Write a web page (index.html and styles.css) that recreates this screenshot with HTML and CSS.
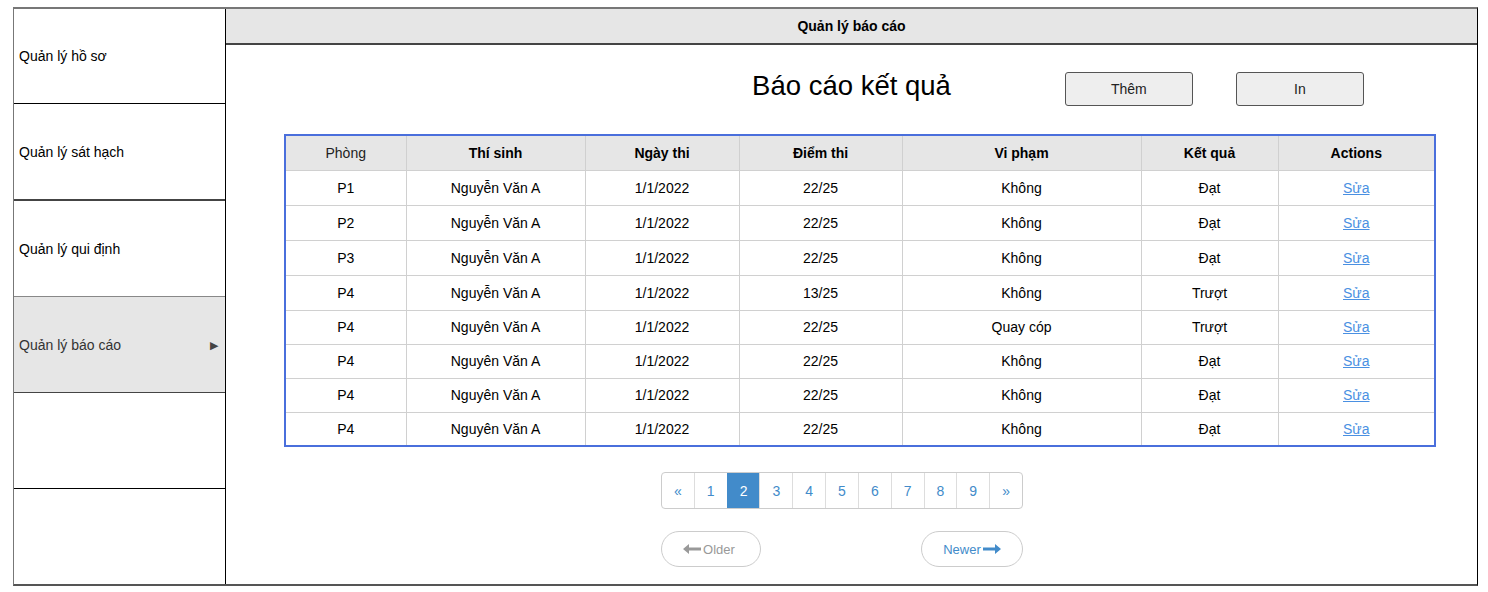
FILE: index.html
```html
<!DOCTYPE html>
<html lang="vi">
<head>
<meta charset="utf-8">
<title>Quản lý báo cáo</title>
<link rel="stylesheet" href="styles.css">
</head>
<body>
<div class="frame">
  <nav class="sidebar">
    <div class="nav-item">Quản lý hồ sơ</div>
    <div class="nav-item thick">Quản lý sát hạch</div>
    <div class="nav-item">Quản lý qui định</div>
    <div class="nav-item active">Quản lý báo cáo <span class="caret">&#9654;</span></div>
    <div class="nav-item"></div>
    <div class="nav-item last"></div>
  </nav>
  <main class="main">
    <header class="topbar">Quản lý báo cáo</header>
    <div class="title-row">
      <div></div>
      <h1 class="title">Báo cáo kết quả</h1>
      <div class="actions">
        <button class="btn">Thêm</button>
        <button class="btn">In</button>
      </div>
    </div>
    <table class="grid">
      <colgroup>
        <col style="width:121px"><col style="width:179px"><col style="width:154px"><col style="width:163px"><col style="width:239px"><col style="width:137px"><col style="width:157px">
      </colgroup>
      <thead>
        <tr><th class="normal">Phòng</th><th>Thí sinh</th><th>Ngày thi</th><th>Điểm thi</th><th>Vi phạm</th><th>Kết quả</th><th>Actions</th></tr>
      </thead>
      <tbody>
        <tr><td>P1</td><td>Nguyễn Văn A</td><td>1/1/2022</td><td>22/25</td><td>Không</td><td>Đạt</td><td><a href="#">Sửa</a></td></tr>
        <tr><td>P2</td><td>Nguyễn Văn A</td><td>1/1/2022</td><td>22/25</td><td>Không</td><td>Đạt</td><td><a href="#">Sửa</a></td></tr>
        <tr><td>P3</td><td>Nguyễn Văn A</td><td>1/1/2022</td><td>22/25</td><td>Không</td><td>Đạt</td><td><a href="#">Sửa</a></td></tr>
        <tr><td>P4</td><td>Nguyễn Văn A</td><td>1/1/2022</td><td>13/25</td><td>Không</td><td>Trượt</td><td><a href="#">Sửa</a></td></tr>
        <tr><td>P4</td><td>Nguyên Văn A</td><td>1/1/2022</td><td>22/25</td><td>Quay cóp</td><td>Trượt</td><td><a href="#">Sửa</a></td></tr>
        <tr><td>P4</td><td>Nguyên Văn A</td><td>1/1/2022</td><td>22/25</td><td>Không</td><td>Đạt</td><td><a href="#">Sửa</a></td></tr>
        <tr><td>P4</td><td>Nguyên Văn A</td><td>1/1/2022</td><td>22/25</td><td>Không</td><td>Đạt</td><td><a href="#">Sửa</a></td></tr>
        <tr><td>P4</td><td>Nguyên Văn A</td><td>1/1/2022</td><td>22/25</td><td>Không</td><td>Đạt</td><td><a href="#">Sửa</a></td></tr>
      </tbody>
    </table>
    <div class="pager-wrap">
      <ul class="pagination">
        <li>&laquo;</li><li>1</li><li class="current">2</li><li>3</li><li>4</li><li>5</li><li>6</li><li>7</li><li>8</li><li>9</li><li>&raquo;</li>
      </ul>
      <div class="pager">
        <span class="pill older"><svg width="18" height="10" viewBox="0 0 18 10"><path d="M0 5 L6 0 L6 3.5 L18 3.5 L18 6.5 L6 6.5 L6 10 Z" fill="#999"/></svg>Older</span>
        <span class="pill newer">Newer<svg width="18" height="10" viewBox="0 0 18 10"><path d="M18 5 L12 0 L12 3.5 L0 3.5 L0 6.5 L12 6.5 L12 10 Z" fill="#428bca"/></svg></span>
      </div>
    </div>
  </main>
</div>
</body>
</html>
```
FILE: styles.css
```css
* { box-sizing: border-box; }
html, body { margin: 0; padding: 0; background: #fff; }
body {
  font-family: "Liberation Sans", Arial, sans-serif;
  font-size: 14px;
  color: #000;
  padding: 7px 10px 0 13px;
}
.frame {
  width: 1465px;
  height: 579px;
  display: grid;
  grid-template-columns: 212px 1fr;
  border: 1px solid #000;
  border-top: 2px solid #777;
  border-left: 1px solid #777;
  border-bottom: 2px solid #555;
}
.sidebar {
  display: flex;
  flex-direction: column;
  border-right: 1px solid #000;
}
.nav-item {
  height: 96px;
  display: flex;
  align-items: center;
  padding-left: 5px;
  padding-right: 8px;
  border-bottom: 1px solid #000;
  font-size: 14px;
  color: #000;
  position: relative;
}
.nav-item:first-child { height: 95px; }
.nav-item.thick { border-bottom: 2px solid #444; height: 97px; }
.nav-item.active {
  background: #e6e6e6;
  color: #333;
  border-top: 1px solid #888;
  margin-top: -1px;
  border-bottom: 1px solid #444;
  height: 97px;
}
.nav-item.last { border-bottom: none; flex: 1; height: auto; }
.caret {
  position: absolute;
  right: 7px;
  top: 50%;
  transform: translateY(-45%);
  font-size: 11px;
  color: #444;
}
.main {
  display: flex;
  flex-direction: column;
  min-width: 0;
}
.topbar {
  height: 36px;
  background: #e6e6e6;
  border-bottom: 2px solid #444;
  display: flex;
  align-items: center;
  justify-content: center;
  font-weight: bold;
  font-size: 14px;
}
.title-row {
  display: grid;
  grid-template-columns: 1fr auto 1fr;
  align-items: center;
  margin-top: 27px;
  height: 34px;
}
.title {
  margin: 0;
  font-weight: normal;
  font-size: 27.5px;
  line-height: 30px;
  margin-top: -6px;
}
.actions {
  display: flex;
  gap: 43px;
  padding-left: 114px;
}
.btn {
  width: 128px;
  height: 34px;
  background: #eee;
  border: 1px solid #555;
  border-radius: 3px;
  font-family: "Liberation Sans", Arial, sans-serif;
  font-size: 14px;
  color: #222;
  padding: 0;
}
.grid {
  margin: 28px 0 0 58px;
  width: 1150px;
  table-layout: fixed;
  border-collapse: collapse;
  border: 2px solid #4a6fdc;
}
.grid th, .grid td {
  border: 1px solid #d0d0d0;
  text-align: center;
  font-size: 14px;
  padding: 0;
}
.grid th {
  background: #e6e6e6;
  height: 35px;
  font-weight: bold;
}
.grid th.normal { font-weight: normal; color: #222; }
.grid td { height: 34px; }
.grid tbody tr:nth-child(-n+4) td { height: 35px; }
.grid a { color: #4a90e2; text-decoration: underline; }
.pager-wrap {
  margin-left: 435px;
  width: 362px;
  margin-top: 25px;
}
.pagination {
  list-style: none;
  margin: 0;
  padding: 0;
  display: flex;
  border: 1px solid #ccc;
  border-radius: 4px;
  overflow: hidden;
  height: 37px;
  width: 362px;
}
.pagination li {
  flex: 1;
  display: flex;
  align-items: center;
  justify-content: center;
  color: #428bca;
  font-size: 14px;
  border-left: 1px solid #ddd;
}
.pagination li:first-child { border-left: none; }
.pagination li.current { background: #428bca; color: #fff; border-color: #428bca; }
.pager {
  display: flex;
  justify-content: space-between;
  margin-top: 22px;
}
.pill {
  height: 36px;
  border: 1px solid #ccc;
  border-radius: 18px;
  display: flex;
  align-items: center;
  justify-content: center;
  gap: 2px;
  font-size: 13px;
}
.older { width: 100px; color: #999; padding-right: 4px; }
.newer { width: 102px; color: #428bca; }
```
